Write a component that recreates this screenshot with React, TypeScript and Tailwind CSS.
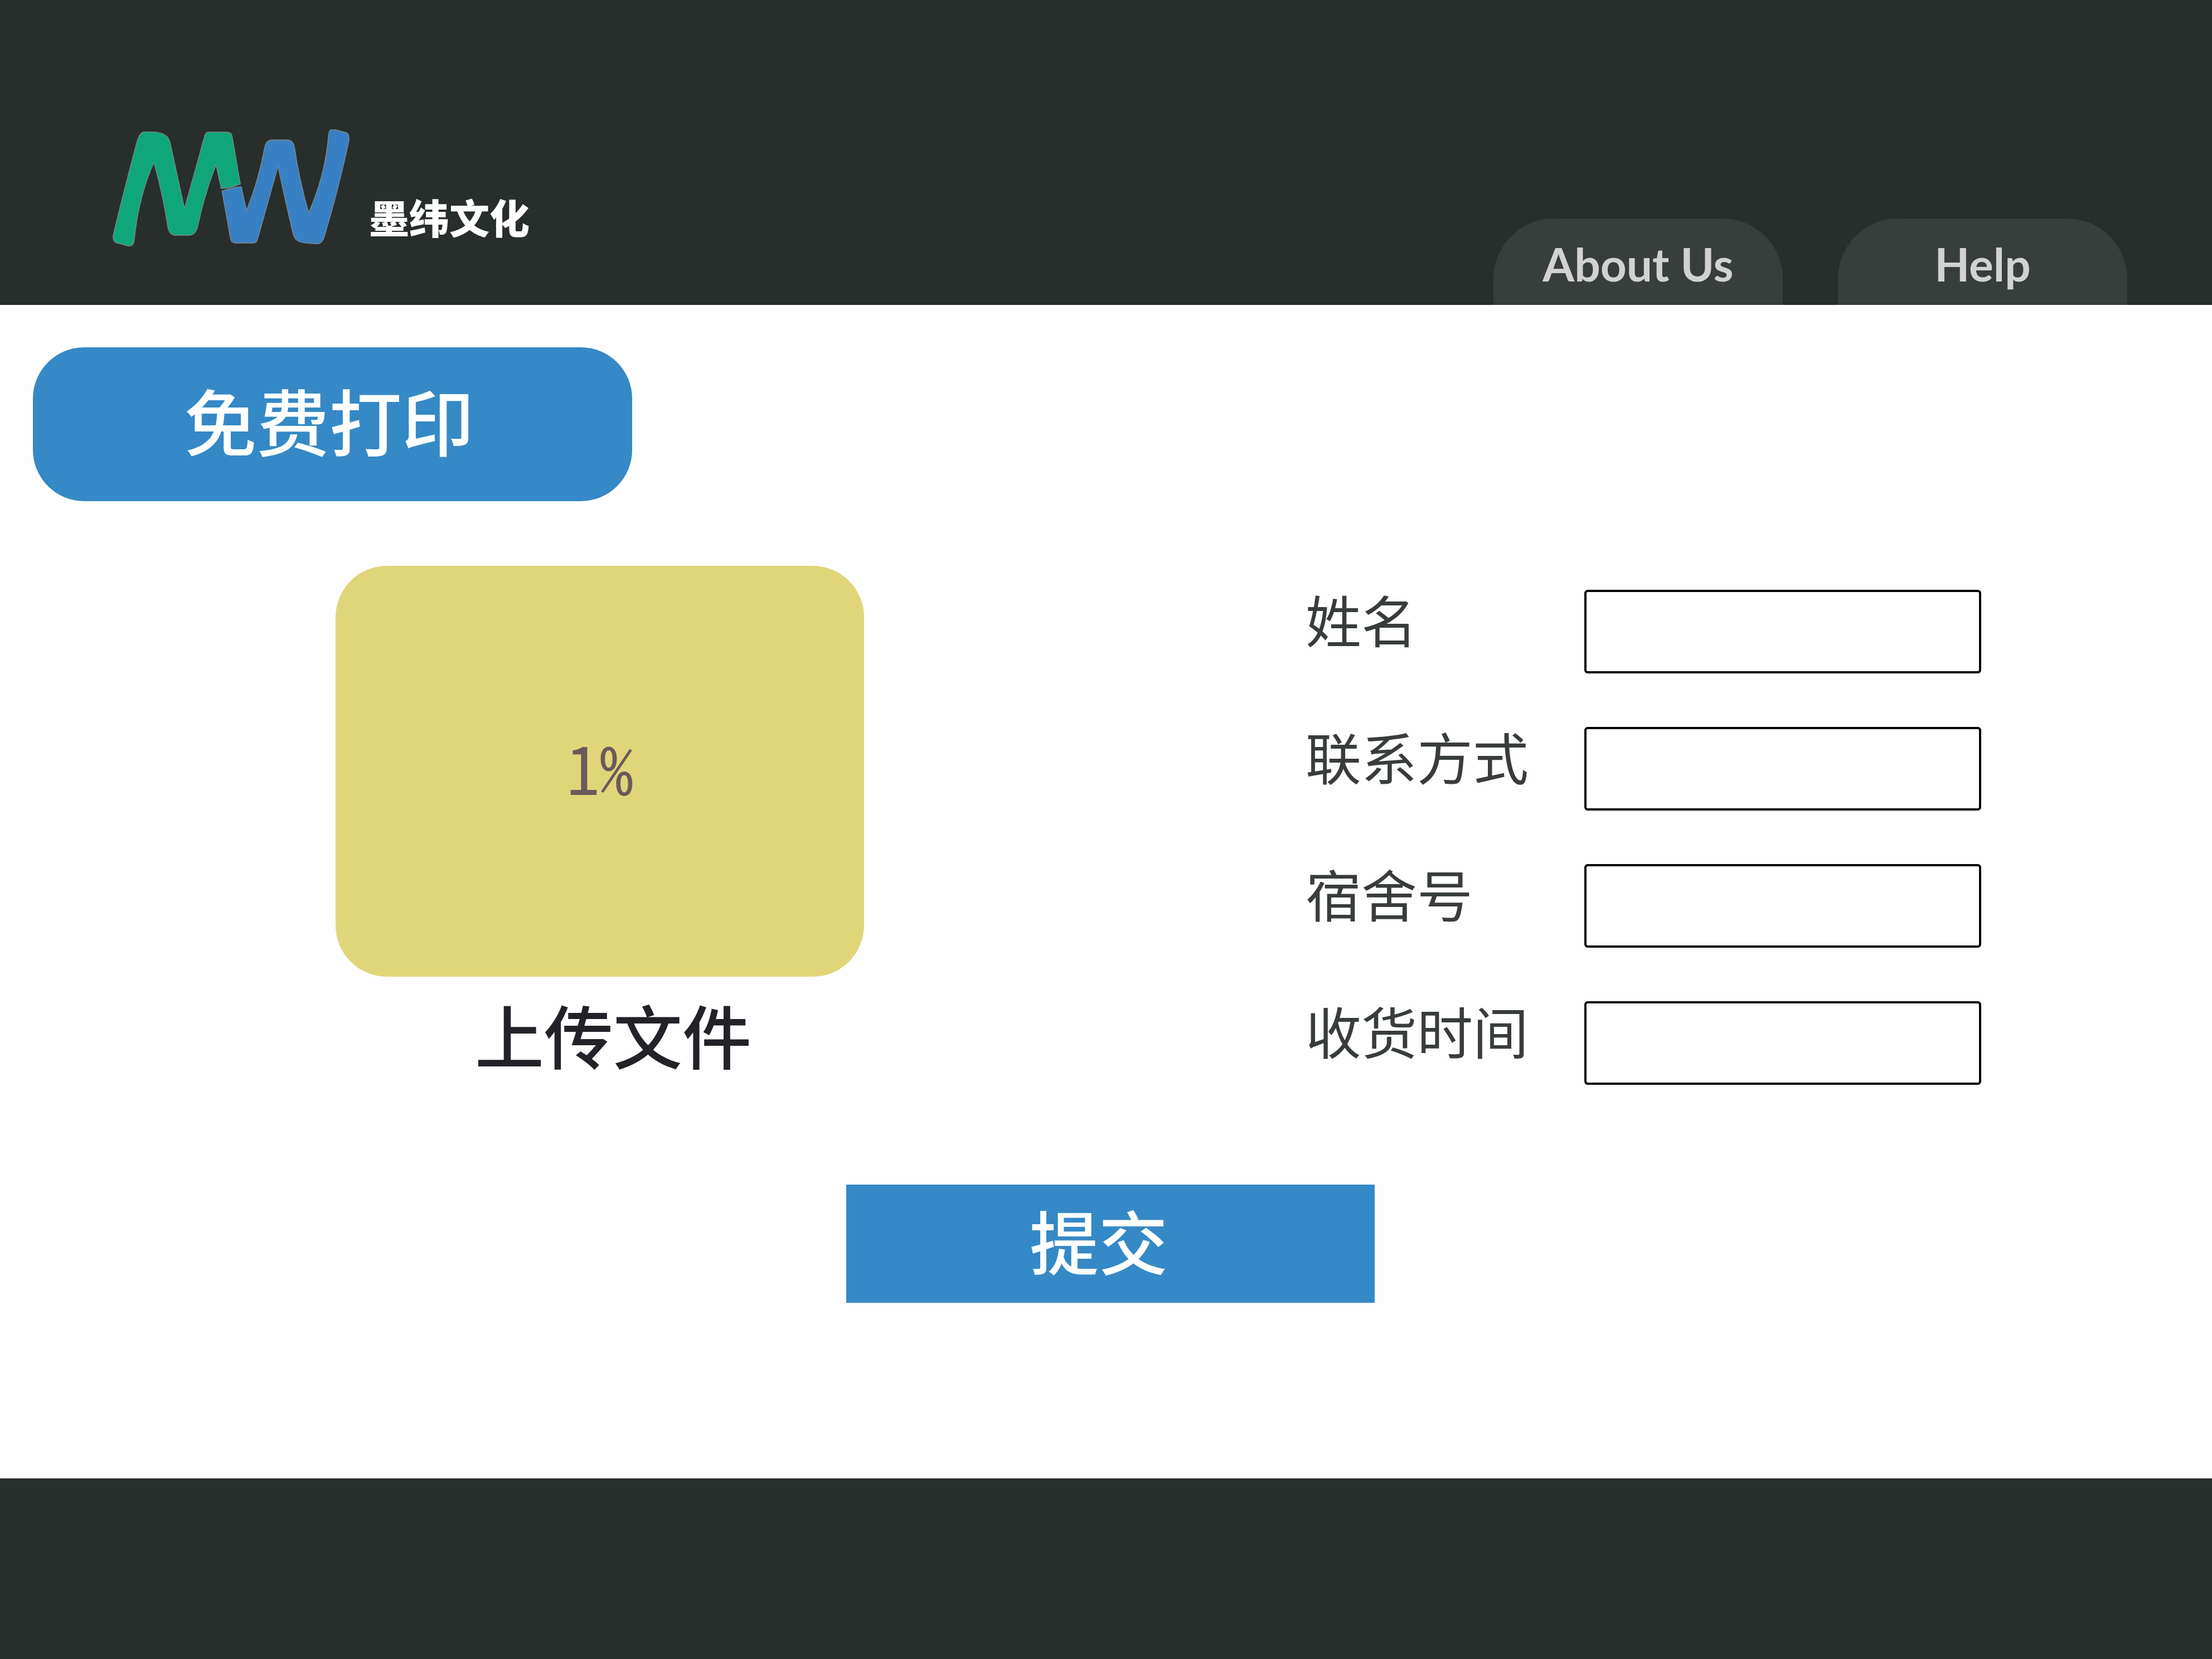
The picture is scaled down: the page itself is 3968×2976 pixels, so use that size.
import React from "react";

const fields = [
  { id: "name", label: "姓名", type: "text" },
  { id: "contact", label: "联系方式", type: "text" },
  { id: "dorm", label: "宿舍号", type: "text" },
  { id: "time", label: "收货时间", type: "text" },
];

const links = [
  { label: "About Us", href: "#about" },
  { label: "Help", href: "#help" },
];

function Logo() {
  return (
    <svg viewBox="66 66 1276 631" className="h-[210px] w-[425px]" aria-hidden="true">
      <g stroke="#7f8a8c" strokeWidth="4" strokeLinejoin="round">
        <path
          fill="#0fa77a"
          d="M235 80H285Q362 84 375 135L453 493L562 100Q568 82 585 81H680Q706 83 709 100L754 361Q705 382 651 385L623 257Q560 420 524 590Q514 634 480 637H400Q370 634 363 590Q335 410 288 245Q205 430 181 670Q176 697 150 695L82 676Q67 668 68 640Q120 420 195 140Q210 82 235 80Z"
        />
        <path
          fill="#3880c4"
          d="M655 399Q705 378 759 375L787 503Q850 350 885 165Q892 124 925 123H1010Q1040 126 1046 165Q1070 330 1122 515Q1210 320 1229 100Q1232 68 1245 67H1262L1325 84Q1341 90 1340 125Q1280 400 1212 625Q1200 682 1170 683Q1110 682 1080 674Q1045 665 1037 625Q985 400 957 266L848 655Q842 678 825 679H725Q704 676 701 655Z"
        />
      </g>
    </svg>
  );
}

function Header() {
  return (
    <header className="flex items-end justify-between bg-[#282e2c] pt-[232px] pr-[152px] pl-[202px]">
      <a href="#home" className="flex items-end gap-[35px] pb-[105px]">
        <Logo />
        <span className="text-[72px] leading-[108px] font-black text-white">墨纬文化</span>
      </a>
      <nav className="flex gap-[99px]">
        {links.map((link) => (
          <a
            key={link.label}
            href={link.href}
            className="flex h-[155px] w-[519px] items-center justify-center rounded-t-[108px] bg-[#383e3c] pt-[6px] font-['Lato','Liberation_Sans',sans-serif] text-[82px] leading-[96px] font-bold text-[#d3d2d2]"
          >
            {link.label}
          </a>
        ))}
      </nav>
    </header>
  );
}

function Upload() {
  return (
    <label htmlFor="file" className="flex w-[948px] cursor-pointer flex-col items-center">
      <span className="flex h-[737px] w-full items-center justify-center rounded-[92px] bg-[#e1d57a] pb-[20px] font-['Noto_Sans_Mono_CJK_SC','Noto_Sans_CJK_SC',sans-serif] text-[120px] leading-[120px] font-medium text-[#695a5d]">
        1%
      </span>
      <span className="mt-[40px] ml-[48px] text-[124px] leading-[124px] font-medium text-[#242228]">
        上传文件
      </span>
      <input id="file" type="file" className="sr-only" />
    </label>
  );
}

export default function App() {
  return (
    <div className="flex min-h-screen flex-col bg-[#fefefe] font-['Noto_Sans_CJK_SC',sans-serif]">
      <Header />
      <main className="flex-1 pt-[76px]">
        <h1 className="ml-[59px] flex h-[276px] w-[1075px] items-center justify-center rounded-[92px] bg-[#3589c6] pr-[12px] pb-[20px] text-[130px] leading-[130px] font-medium text-white">
          免费打印
        </h1>
        <form className="flex flex-col items-center" onSubmit={(e) => e.preventDefault()}>
          <div className="flex w-full items-start justify-between pt-[116px] pr-[414px] pl-[602px]">
            <Upload />
            <div className="flex flex-col gap-[96px] pt-[43px]">
              {fields.map((f) => (
                <div key={f.id} className="flex items-start">
                  <label htmlFor={f.id} className="w-[500px] text-[100px] leading-[104px] text-[#383d3b]">
                    {f.label}
                  </label>
                  <input
                    id={f.id}
                    type={f.type}
                    className="h-[150px] w-[712px] rounded-md border-4 border-black bg-transparent px-8 text-[80px] text-[#383d3b]"
                  />
                </div>
              ))}
            </div>
          </div>
          <button
            type="submit"
            className="mt-[179px] ml-[16px] flex h-[212px] w-[948px] items-center justify-center bg-[#3589c6] pr-[42px] pb-[16px] text-[124px] leading-[124px] font-medium text-white"
          >
            提交
          </button>
        </form>
      </main>
      <footer className="h-[324px] bg-[#282e2c]" />
    </div>
  );
}
